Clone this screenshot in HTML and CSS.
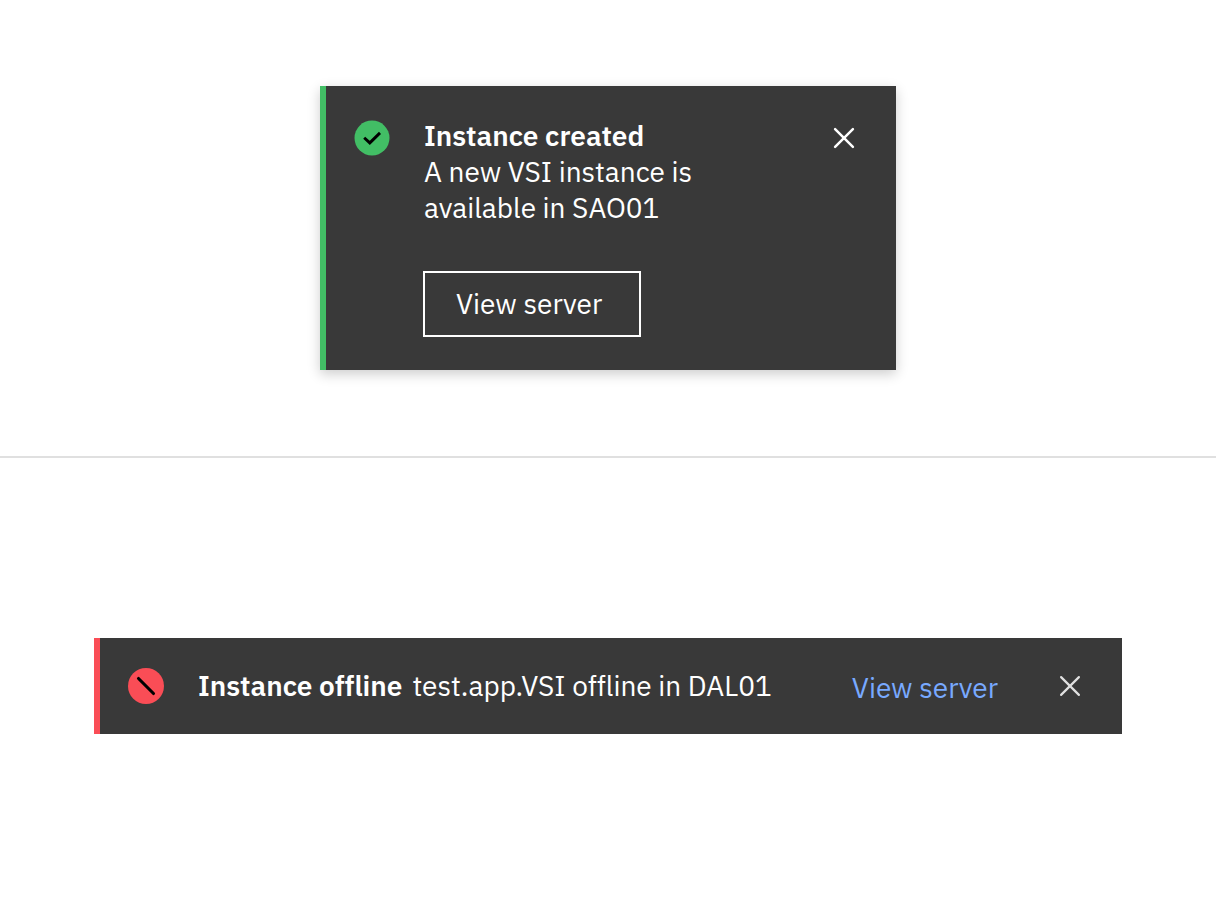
FILE: index.html
```html
<!DOCTYPE html>
<html lang="en">
<head>
<meta charset="utf-8">
<meta name="viewport" content="width=device-width, initial-scale=1">
<title>Notifications</title>
<link rel="stylesheet" href="styles.css">
</head>
<body>
<main class="page">
  <section class="example">
    <div class="toast" role="status">
      <svg class="status-icon" viewBox="0 0 36 36" aria-hidden="true">
        <circle cx="18" cy="18" r="17.5" fill="#42be65"/>
        <path d="M10.2 17.7l5.6 5.2L26 12.9" fill="none" stroke="#000" stroke-width="2.9"/>
      </svg>
      <div class="toast-body">
        <strong class="title">Instance created</strong>
        <p class="message">A new VSI instance is<br>available in SAO01</p>
        <button class="action-button" type="button">View server</button>
      </div>
      <button class="close" type="button" aria-label="Close">
        <svg class="close-icon" viewBox="0 0 24 24" aria-hidden="true">
          <path d="M3.1 3.1l17.8 17.8M20.9 3.1L3.1 20.9" fill="none" stroke="currentColor" stroke-width="2.5" stroke-linecap="round"/>
        </svg>
      </button>
    </div>
  </section>
  <section class="example example-divided">
    <div class="banner" role="alert">
      <svg class="status-icon" viewBox="0 0 36 36" aria-hidden="true">
        <circle cx="18" cy="18" r="18" fill="#fa4d56"/>
        <path d="M10.5 10.5l15 15" fill="none" stroke="#000" stroke-width="3.1" stroke-linecap="round"/>
      </svg>
      <p class="banner-text"><strong class="title">Instance offline</strong><span>test.app.VSI offline in DAL01</span></p>
      <a class="action-link" href="#">View server</a>
      <button class="close close-muted" type="button" aria-label="Close">
        <svg class="close-icon" viewBox="0 0 24 24" aria-hidden="true">
          <path d="M3.1 3.1l17.8 17.8M20.9 3.1L3.1 20.9" fill="none" stroke="currentColor" stroke-width="2.2" stroke-linecap="round"/>
        </svg>
      </button>
    </div>
  </section>
</main>
</body>
</html>
```
FILE: styles.css
```css
* {
  box-sizing: border-box;
}

body {
  margin: 0;
  background: #fff;
  color: #fff;
  font-family: "IBM Plex Sans", "Noto Sans", sans-serif;
  font-size: 28px;
  line-height: 36px;
}

.page {
  display: grid;
  grid-template-rows: 1fr 1fr;
  min-height: 100vh;
}

.example {
  display: flex;
  align-items: center;
  justify-content: center;
  padding: 2px 16px;
}

.example-divided {
  border-top: 2px solid #e0e0e0;
  padding: 2px 16px 0;
}

.toast {
  display: flex;
  align-items: flex-start;
  width: 100%;
  max-width: 576px;
  padding: 32px 40px 34px 28px;
  border-left: 6px solid #42be65;
  background: #393939;
  box-shadow: 0 4px 12px rgba(0, 0, 0, 0.2);
}

.status-icon {
  flex: none;
  width: 36px;
  height: 36px;
}

.toast .status-icon,
.toast .close {
  margin-top: 2px;
}

.toast-body {
  flex: 1;
  padding-left: 34px;
}

.title {
  font-weight: 600;
}

.message {
  margin: 0 0 46px;
}

.action-button {
  display: block;
  min-width: 216px;
  height: 64px;
  padding: 0 32px;
  border: 0;
  outline: 2px solid #fff;
  outline-offset: -1px;
  background: none;
  color: #fff;
  font: inherit;
  text-align: left;
  cursor: pointer;
}

.close {
  display: flex;
  flex: none;
  align-items: center;
  height: 36px;
  padding: 0;
  border: 0;
  background: none;
  color: #fff;
  cursor: pointer;
}

.close-muted {
  color: #e0e0e0;
}

.close-icon {
  width: 24px;
  height: 24px;
}

.banner {
  display: flex;
  align-items: center;
  width: 100%;
  max-width: 1028px;
  min-height: 96px;
  padding: 0 40px 0 28px;
  border-left: 6px solid #fa4d56;
  background: #393939;
}

.banner-text {
  display: flex;
  flex: 1;
  flex-wrap: wrap;
  column-gap: 10px;
  margin: 0;
  padding-left: 34px;
}

.action-link {
  margin-right: 60px;
  padding-top: 4px;
  color: #78a9ff;
  text-decoration: none;
}
```
